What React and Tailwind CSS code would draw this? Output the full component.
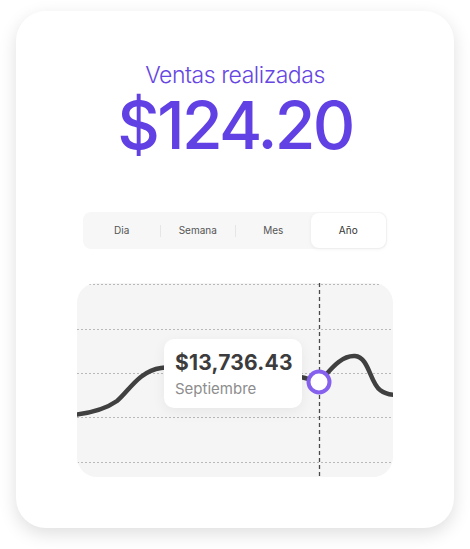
import React, { useState } from 'react';

const tabs = ['Dia', 'Semana', 'Mes', 'Año'];

// Sales curve, drawn in chart-local coordinates (316 x 194)
const CURVE =
  'M -4 132 C 15 130, 30 125, 40 118 C 52 108, 62 88, 84 85 C 120 80, 200 88, 228 95 C 236 97, 239 100, 242 99 C 250 92, 262 72, 278 73 C 292 74, 293 100, 303 107 C 308 111, 313 112, 320 112';

const gridLines = [1, 46, 90, 134, 179];

const SalesChart = () => (
  <div className="relative w-[316px] h-[194px] rounded-[20px] bg-[#f5f5f5] overflow-hidden">
    <svg width="316" height="194" viewBox="0 0 316 194" className="absolute inset-0">
      {gridLines.map(y => (
        <line
          key={y}
          x1="0"
          x2="316"
          y1={y + 0.5}
          y2={y + 0.5}
          stroke="#b9b9b9"
          strokeWidth="1"
          strokeDasharray="2 2"
        />
      ))}
      <line x1="242.5" x2="242.5" y1="0" y2="194" stroke="#4a4a4a" strokeWidth="1.3" strokeDasharray="4 3" />
      <path d={CURVE} fill="none" stroke="#404040" strokeWidth="4.5" strokeLinecap="round" />
      <circle cx="242" cy="99" r="10.5" fill="#fff" stroke="#8561ee" strokeWidth="4" />
    </svg>

    {/* Tooltip */}
    <div className="absolute left-[87px] top-[56px] w-[138px] h-[69px] rounded-[10px] bg-white shadow-[0_4px_14px_rgba(0,0,0,0.06)] pl-[11px] pt-[13px]">
      <div className="text-[21px] leading-none font-bold text-[#3c3c3c] tracking-[0.01em]">$13,736.43</div>
      <div className="mt-[8px] text-[15px] leading-none text-[#8d8d8d]">Septiembre</div>
    </div>
  </div>
);

export default function App() {
  const [active, setActive] = useState('Año');

  return (
    <div
      className="w-[470px] h-[549px] bg-white pt-[11px] pl-4"
      style={{ fontFamily: 'Inter, "Noto Sans", sans-serif' }}
    >
      <div className="w-[438px] h-[517px] rounded-[30px] bg-white shadow-[0_6px_18px_rgba(0,0,0,0.13)] flex flex-col items-center">
        <div className="mt-[53px] text-[23px] leading-none font-light text-[#6646e3] tracking-[-0.02em]">
          Ventas realizadas
        </div>
        <div className="mt-[5px] text-[66px] leading-none font-medium text-[#6141e4] tracking-[-0.04em]">
          $124.20
        </div>

        {/* Period tabs */}
        <div className="mt-[54px] w-[304px] h-[37px] rounded-lg bg-[#f7f7f7] flex items-center p-px">
          {tabs.map((t, i) => {
            const isActive = t === active;
            const prevActive = i > 0 && tabs[i - 1] === active;
            return (
              <div key={t} className="flex-1 h-full flex items-center">
                {i > 0 && !isActive && !prevActive && <span className="w-px h-3 bg-[#e6e6e6]" />}
                <button
                  onClick={() => setActive(t)}
                  className={`flex-1 h-full rounded-lg text-[10px] ${
                    isActive
                      ? 'bg-white text-[#333] shadow-[0_1px_4px_rgba(0,0,0,0.06)]'
                      : 'text-[#555]'
                  }`}
                >
                  {t}
                </button>
              </div>
            );
          })}
        </div>

        <div className="mt-[34px]">
          <SalesChart />
        </div>
      </div>
    </div>
  );
}
